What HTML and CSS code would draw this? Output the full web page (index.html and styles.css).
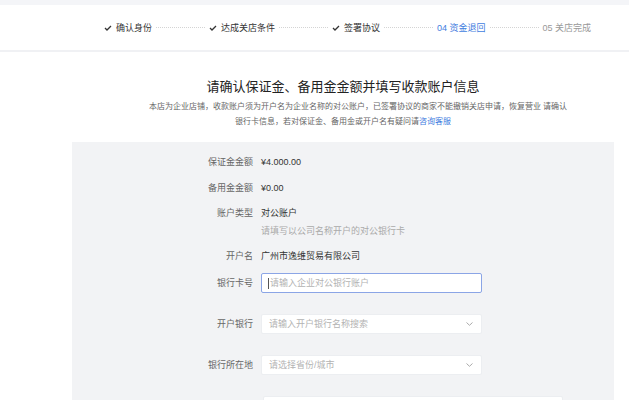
FILE: index.html
```html
<!DOCTYPE html>
<html lang="zh-CN">
<head>
<meta charset="utf-8">
<link rel="stylesheet" href="styles.css">
</head>
<body>
<div class="topstrip"></div>
<header class="header">
  <div class="wrap steps">
    <div class="step done"><svg class="check" viewBox="0 0 8 6" width="8" height="6"><polyline points="1,3 3,5 7,1" fill="none" stroke="#333" stroke-width="1.3"/></svg><span>确认身份</span></div>
    <div class="line"></div>
    <div class="step done"><svg class="check" viewBox="0 0 8 6" width="8" height="6"><polyline points="1,3 3,5 7,1" fill="none" stroke="#333" stroke-width="1.3"/></svg><span>达成关店条件</span></div>
    <div class="line"></div>
    <div class="step done"><svg class="check" viewBox="0 0 8 6" width="8" height="6"><polyline points="1,3 3,5 7,1" fill="none" stroke="#333" stroke-width="1.3"/></svg><span>签署协议</span></div>
    <div class="line"></div>
    <div class="step active"><span>04 资金退回</span></div>
    <div class="line"></div>
    <div class="step todo"><span>05 关店完成</span></div>
  </div>
</header>
<main class="wrap">
  <h1 class="title">请确认保证金、备用金金额并填写收款账户信息</h1>
  <p class="desc">本店为企业店铺，收款账户须为开户名为企业名称的对公账户，已签署协议的商家不能撤销关店申请，恢复营业 请确认<br>银行卡信息，若对保证金、备用金或开户名有疑问请<a class="link">咨询客服</a></p>
  <section class="panel">
    <div class="row r1"><div class="label">保证金金额</div><div class="value">¥4.000.00</div></div>
    <div class="row r2"><div class="label">备用金金额</div><div class="value">¥0.00</div></div>
    <div class="row r3"><div class="label">账户类型</div><div class="value">对公账户<div class="hint">请填写以公司名称开户的对公银行卡</div></div></div>
    <div class="row r4"><div class="label">开户名</div><div class="value">广州市逸维贸易有限公司</div></div>
    <div class="row field"><div class="label">银行卡号</div><div class="input focus"><span class="caret"></span><span class="ph">请输入企业对公银行账户</span></div></div>
    <div class="row field"><div class="label">开户银行</div><div class="input select"><span class="ph">请输入开户银行名称搜索</span><svg class="chev" viewBox="0 0 7 4" width="7" height="4"><polyline points="0.5,0.5 3.5,3.3 6.5,0.5" fill="none" stroke="#aaa" stroke-width="1"/></svg></div></div>
    <div class="row field"><div class="label">银行所在地</div><div class="input select"><span class="ph">请选择省份/城市</span><svg class="chev" viewBox="0 0 7 4" width="7" height="4"><polyline points="0.5,0.5 3.5,3.3 6.5,0.5" fill="none" stroke="#aaa" stroke-width="1"/></svg></div></div>
    <div class="row field"><div class="label"></div><div class="input wide"></div></div>
  </section>
</main>
</body>
</html>
```

FILE: styles.css
```css
html, body { margin: 0; padding: 0; background: #fff; overflow: hidden; }
body { font-family: "Liberation Sans", "Noto Sans CJK SC", sans-serif; color: #333; width: 629px; height: 400px; }

.topstrip { height: 5px; background: #f4f5f8; }
.header { height: 45px; background: #fff; border-bottom: 2px solid #f0f1f4; }
.wrap { margin-left: 72px; width: 542px; }

.steps { display: flex; justify-content: flex-start; align-items: center; height: 45px; padding-left: 32px; box-sizing: border-box; font-size: 9px; line-height: 12px; }
.step { display: flex; align-items: center; white-space: nowrap; }
.check { margin-right: 4px; }
.step.done { color: #333; }
.step.active { color: #3f7de0; }
.step.todo { color: #999; }
.line { width: 49px; margin: 0 4px; border-top: 1px dotted #d4d4d4; height: 0; }

.title { margin: 26px 0 0; font-size: 13px; line-height: 18px; font-weight: normal; color: #222; text-align: center; }
.desc { margin: 3px 0 0; font-size: 8px; line-height: 15px; color: #666; text-align: center; text-indent: 30px; white-space: nowrap; }
.link { color: #3f7de0; }

.panel { background: #f2f3f5; margin-top: 13px; padding-top: 13px; height: 300px; font-size: 9px; }
.row { display: flex; align-items: flex-start; line-height: 14px; }
.label { width: 181px; text-align: right; color: #666; flex: none; }
.value { margin-left: 8px; color: #333; }
.r1 { margin-bottom: 12px; }
.r2 { margin-bottom: 11px; }
.r3 { margin-bottom: 11px; }
.r4 { margin-bottom: 10px; }
.hint { margin-top: 4px; color: #aaa; }

.field { align-items: center; margin-bottom: 21px; }
.input { margin-left: 8px; width: 221px; height: 20px; box-sizing: border-box; background: #fff; border: 1px solid #eceef1; border-radius: 2px; display: flex; align-items: center; padding-left: 7px; padding-right: 8px; }
.input.focus { border-color: #8ba5e6; padding-left: 6px; }
.caret { width: 1px; height: 11px; background: #555; margin-right: 1px; }
.ph { color: #b3b3b3; flex: 1; white-space: nowrap; }
.chev { flex: none; }
.input.wide { width: 300px; margin-left: 10px; }
```
